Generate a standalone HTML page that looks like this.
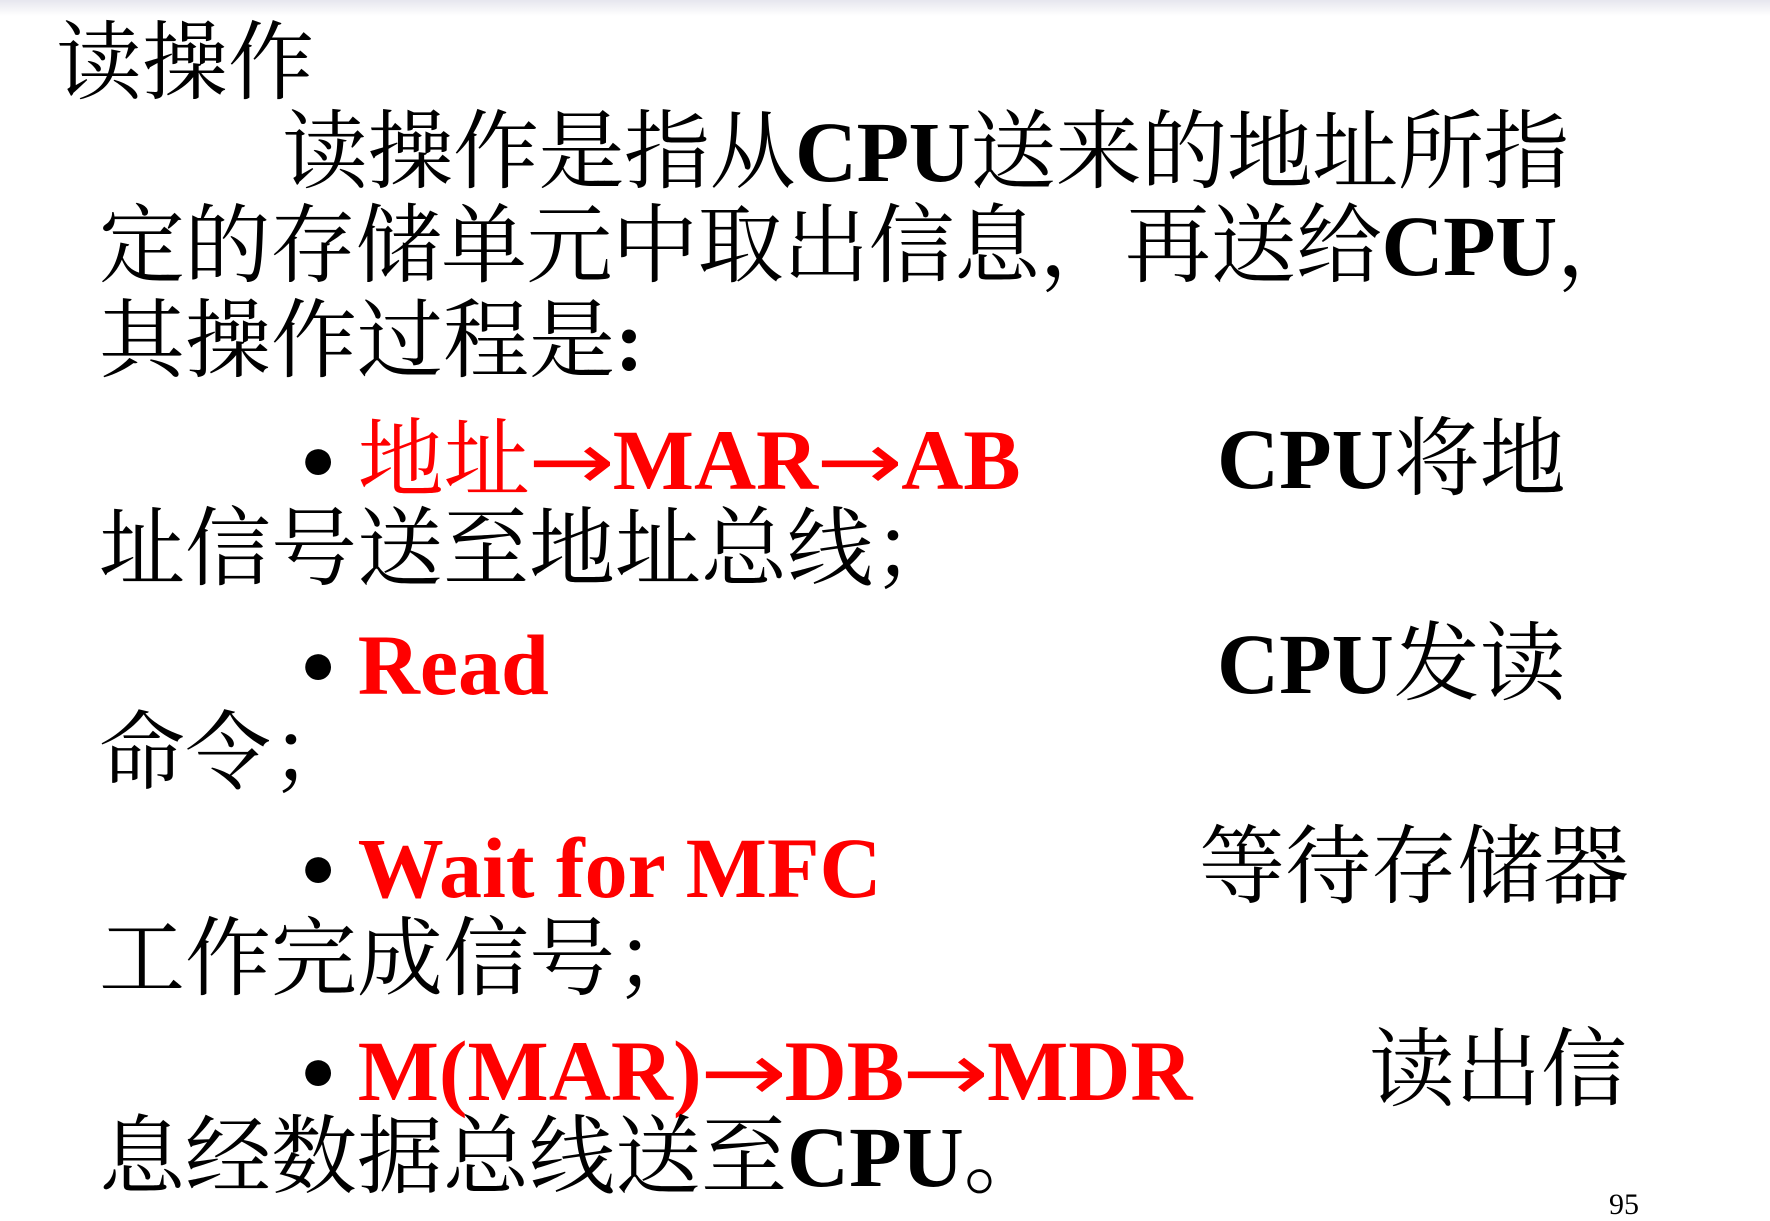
<!DOCTYPE html>
<html><head><meta charset="utf-8"><style>
body{margin:0;width:1770px;height:1205px;background:#fff;position:relative;overflow:hidden;
font-family:"Liberation Serif","Noto Serif CJK SC",serif;}
.top{position:absolute;left:0;top:0;width:1770px;height:16px;background:linear-gradient(#e6e6ee,#fff);}
.l{position:absolute;font-size:86px;line-height:86px;white-space:nowrap;color:#000;}
b{font-weight:bold;}
.r{color:#ff0000;}
.dot{font-size:60px;vertical-align:10px;}
.ar{font-family:"DejaVu Sans",sans-serif;font-weight:normal;font-size:80px;display:inline-block;transform:scaleX(1.3);margin:0 8px;}
.sc{font-family:"Noto Serif CJK SC",serif;}
</style></head><body>
<div class="top"></div>
<div class="l" style="left:56px;top:20px;">读操作</div>
<div class="l" style="left:282px;top:109px;letter-spacing:-0.5px;">读操作是指从<b>CPU</b>送来的地址所指</div>
<div class="l" style="left:99px;top:203px;letter-spacing:-0.5px;">定的存储单元中取出信息，再送给<b>CPU</b>，</div>
<div class="l" style="left:99px;top:298px;">其操作过程是<b>:</b></div>

<div class="l" style="left:300px;top:416px;"><span class="dot">●</span> <span class="r">地址<span class="ar">→</span><b>MAR</b><span class="ar">→</span><b>AB</b></span></div>
<div class="l" style="left:1217px;top:416px;"><b>CPU</b>将地</div>
<div class="l" style="left:99px;top:498px;">址信号送至地址总线<span class="sc">；</span></div>

<div class="l" style="left:300px;top:621px;"><span class="dot">●</span> <b class="r">Read</b></div>
<div class="l" style="left:1217px;top:621px;"><b>CPU</b>发读</div>
<div class="l" style="left:99px;top:702px;">命令<span class="sc">；</span></div>

<div class="l" style="left:300px;top:824px;"><span class="dot">●</span> <b class="r">Wait for MFC</b></div>
<div class="l" style="left:1199px;top:824px;">等待存储器</div>
<div class="l" style="left:99px;top:908px;">工作完成信号<span class="sc">；</span></div>

<div class="l" style="left:300px;top:1027px;"><span class="dot">●</span> <span class="r"><b>M(MAR)</b><span class="ar">→</span><b>DB</b><span class="ar">→</span><b>MDR</b></span></div>
<div class="l" style="left:1369px;top:1027px;">读出信</div>
<div class="l" style="left:99px;top:1114px;">息经数据总线送至<b>CPU</b>。</div>
<div style="position:absolute;left:1609px;top:1190px;font-size:30px;line-height:30px;">95</div>
</body></html>
